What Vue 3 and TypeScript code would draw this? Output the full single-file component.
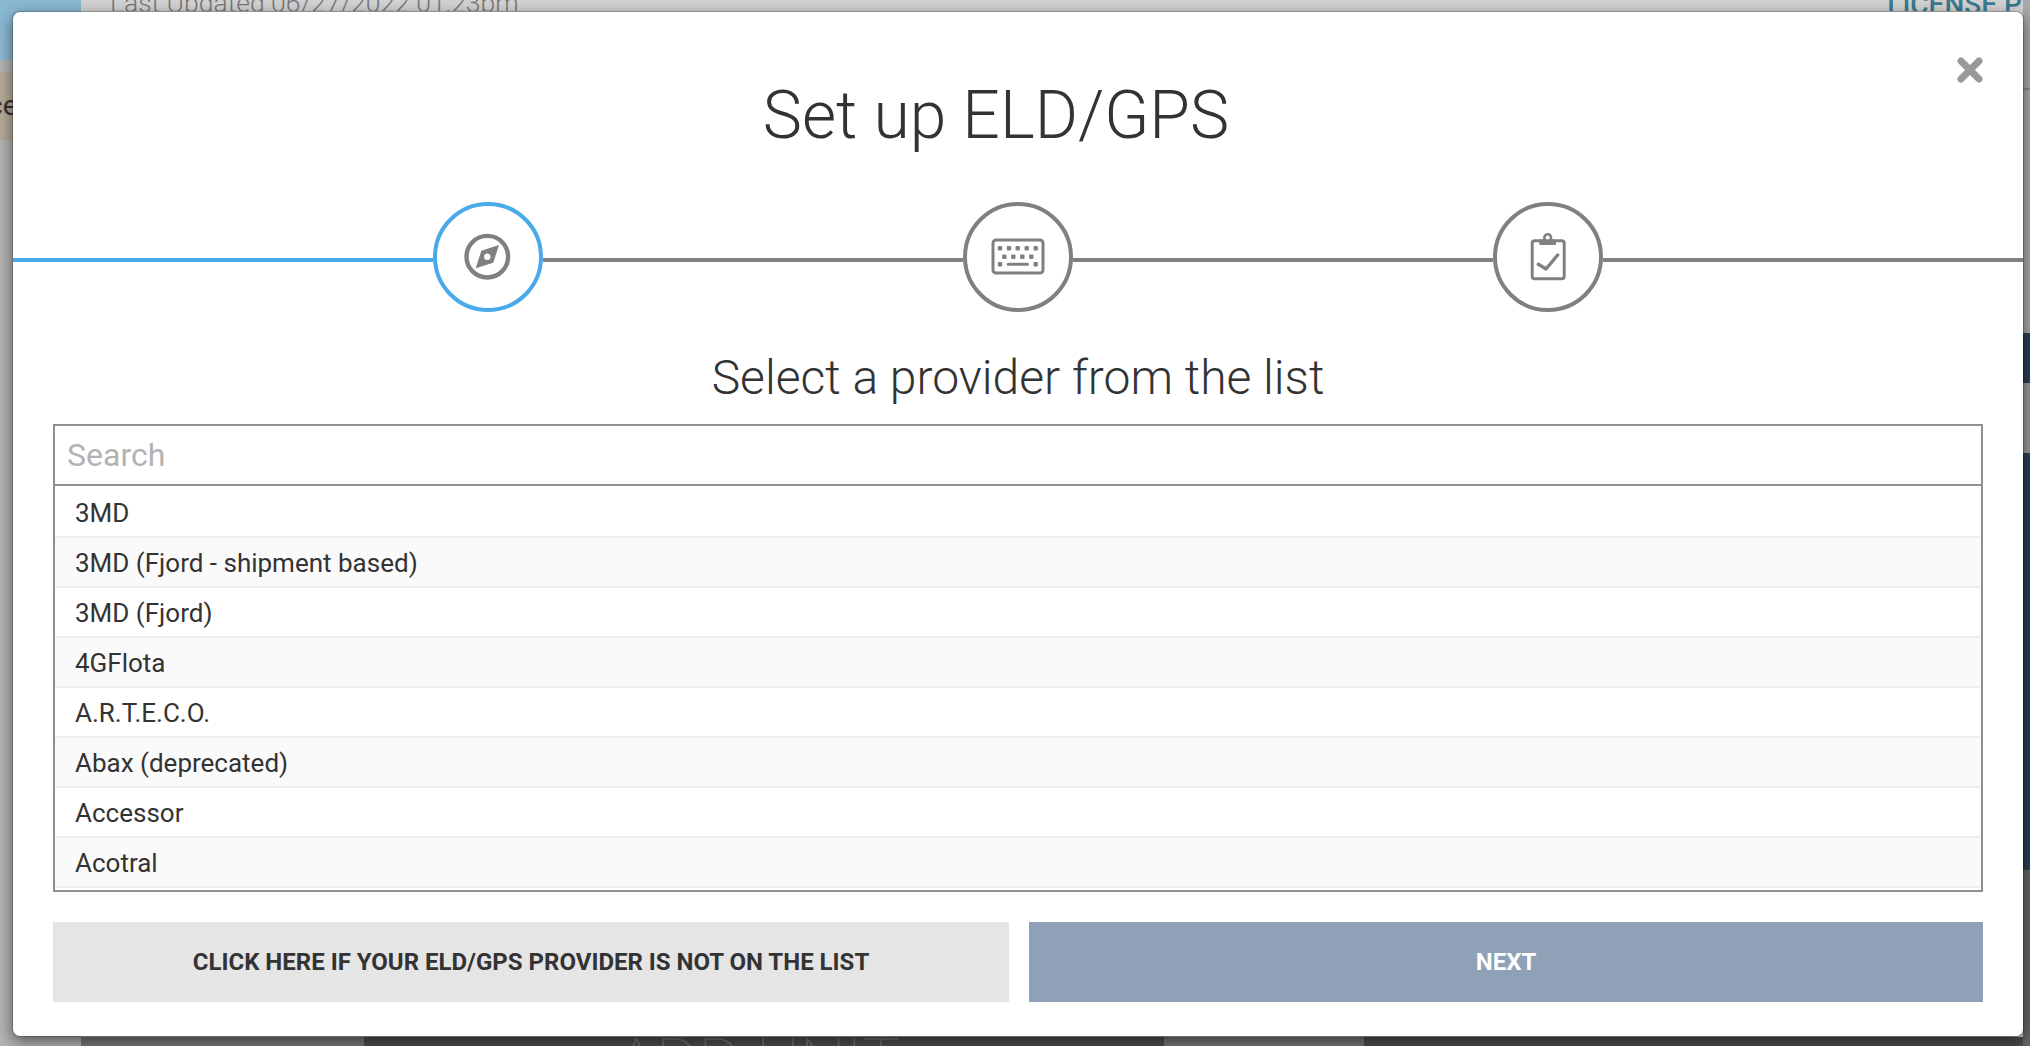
<script setup lang="ts">
import { ref } from 'vue'

const providers: string[] = [
  '3MD',
  '3MD (Fjord - shipment based)',
  '3MD (Fjord)',
  '4GFlota',
  'A.R.T.E.C.O.',
  'Abax (deprecated)',
  'Accessor',
  'Acotral'
]

const search = ref('')
const keyDots = [
  [-18, -8.7], [-9, -8.7], [-0.3, -8.7], [8.7, -8.7], [17.7, -8.7],
  [-13.7, -0.3], [-4.7, -0.3], [4.3, -0.3], [13.3, -0.3],
  [-18, 7.3], [17.7, 7.3]
]
</script>

<template>
  <div class="page">
    <!-- dimmed page behind the modal -->
    <div class="backdrop">
      <aside class="side">
        <div class="side-blue"></div>
        <div class="side-tan"><span>ce</span></div>
      </aside>
      <div class="main">
        <div class="content">
          <div class="top-row">
            <span class="updated">Last Updated 06/27/2022 01:23pm</span>
            <span class="license">LICENSE PLATE</span>
          </div>
        </div>
        <div class="bottom">
          <div class="bottom-left"></div>
          <div class="bottom-dark"><span>ADD UNIT</span></div>
          <div class="bottom-mid"></div>
          <div class="bottom-end"></div>
        </div>
      </div>
      <div class="edge">
        <div class="edge-grey"></div>
        <div class="edge-navy"><div class="edge-patch"></div></div>
        <div class="edge-dark"></div>
      </div>
    </div>

    <div class="modal">
      <button class="close" type="button" aria-label="Close">
        <svg width="30" height="30" viewBox="-15 -15 30 30">
          <path d="M-9 -9 L9 9 M9 -9 L-9 9" stroke="#999" stroke-width="7" stroke-linecap="round" fill="none" />
        </svg>
      </button>

      <h1 class="title">Set up ELD/GPS</h1>

      <div class="steps">
        <div class="line line--active"></div>
        <div class="step step--active">
          <svg width="60" height="60" viewBox="-30 -30 60 60">
            <circle cx="-0.7" cy="-0.3" r="20.8" fill="none" stroke="#808080" stroke-width="4.4" />
            <path d="M11 -12 L5.3 5.7 L-12.3 11.3 L-6.7 -6.3 Z" fill="#808080" />
            <circle cx="-0.7" cy="-0.3" r="3.2" fill="#fff" />
          </svg>
        </div>
        <div class="line"></div>
        <div class="step">
          <svg width="60" height="60" viewBox="-30 -30 60 60">
            <rect x="-25" y="-17" width="50" height="33" rx="3" fill="none" stroke="#808080" stroke-width="3" />
            <rect v-for="(d, i) in keyDots" :key="i" :x="d[0] - 2.2" :y="d[1] - 2.2" width="4.4" height="4.4" rx="1" fill="#808080" />
            <rect x="-11.3" y="5.8" width="22.3" height="3" rx="1.5" fill="#808080" />
          </svg>
        </div>
        <div class="line"></div>
        <div class="step">
          <svg width="60" height="60" viewBox="-30 -30 60 60">
            <rect x="-15.8" y="-16.2" width="32" height="38" rx="2.5" fill="none" stroke="#808080" stroke-width="3" />
            <circle cx="-0.3" cy="-19.3" r="3.4" fill="#fff" stroke="#808080" stroke-width="2.6" />
            <rect x="-8.7" y="-17.5" width="16.7" height="5.5" rx="1" fill="#808080" />
            <path d="M-9.7 7.3 L-2 12 L9.7 -2" fill="none" stroke="#808080" stroke-width="3.4" stroke-linejoin="round" stroke-linecap="round" />
          </svg>
        </div>
        <div class="line"></div>
      </div>

      <h2 class="subtitle">Select a provider from the list</h2>

      <div class="body">
        <div class="picker">
          <input v-model="search" class="search" type="text" placeholder="Search" />
          <ul class="list">
            <li v-for="name in providers" :key="name" class="row">{{ name }}</li>
          </ul>
        </div>

        <div class="actions">
          <button class="btn btn-alt" type="button">Click here if your ELD/GPS provider is not on the list</button>
          <button class="btn btn-next" type="button">Next</button>
        </div>
      </div>
    </div>
  </div>
</template>

<style>
html,
body {
  margin: 0;
  overflow: hidden;
}
</style>

<style scoped>
.page {
  position: relative;
  width: 2030px;
  height: 1046px;
  overflow: hidden;
  font-family: Roboto, "Liberation Sans", sans-serif;
  color: #333;
}

.backdrop {
  display: flex;
  height: 100%;
  background: #d3d3d3;
}
.side {
  width: 81px;
  flex: none;
  display: flex;
  flex-direction: column;
  background: #b4b4b4;
}
.side-blue {
  height: 60px;
  background: #8bb9d3;
}
.side-tan {
  height: 68px;
  margin-top: 12px;
  background: #b6ab98;
  overflow: hidden;
  font-size: 28px;
  line-height: 68px;
  text-indent: -12px;
}
.main {
  flex: 1;
  min-width: 0;
  display: flex;
  flex-direction: column;
}
.content {
  flex: 1;
}
.top-row {
  display: flex;
  justify-content: space-between;
  height: 11px;
  overflow: hidden;
  padding: 0 0 0 29px;
  white-space: nowrap;
}
.updated {
  font-size: 26.5px;
  font-weight: 300;
  line-height: 22px;
  margin-top: -8px;
  color: #777;
}
.license {
  font-size: 28px;
  font-weight: 500;
  line-height: 22px;
  margin-top: -6px;
  margin-right: -64px;
  color: #3b7a8f;
}
.bottom {
  flex: none;
  display: flex;
  height: 9px;
  background: #4d4d4d;
  overflow: hidden;
}
.bottom-left {
  width: 283px;
  background: #7a7a7a;
}
.bottom-dark {
  width: 800px;
  padding-left: 253px;
  box-sizing: border-box;
  color: #707070;
  font-size: 65px;
  font-weight: 100;
  line-height: 65px;
  white-space: nowrap;
}
.bottom-dark span {
  display: block;
  margin-top: -7px;
}
.bottom-mid {
  width: 200px;
  background: #777;
}
.bottom-end {
  flex: 1;
}
.edge {
  width: 7px;
  flex: none;
  display: flex;
  flex-direction: column;
  background: #666;
}
.edge-grey {
  height: 333px;
  background: linear-gradient(#a9a9a9 88px, #888 88px, #888 90px, #a9a9a9 90px);
}
.edge-navy {
  height: 537px;
  padding-top: 50px;
  box-sizing: border-box;
  background: #2a3f55;
}
.edge-patch {
  height: 70px;
  background: #999;
}
.edge-dark {
  flex: 1;
}

/* modal sits over the page */
.modal {
  position: absolute;
  left: 12px;
  top: 11px;
  width: 2012px;
  height: 1026px;
  box-sizing: border-box;
  display: flex;
  flex-direction: column;
  background: #fff;
  background-clip: padding-box;
  border: 1px solid rgba(0, 0, 0, 0.2);
  border-radius: 8px;
  box-shadow: 0 5px 15px rgba(0, 0, 0, 0.5);
}
.close {
  position: absolute;
  top: 43px;
  right: 38px;
  padding: 0;
  border: none;
  background: none;
  line-height: 0;
}
.title {
  margin: 0;
  padding: 61px 44px 0 0;
  height: 129px;
  font-size: 66px;
  line-height: 86px;
  font-weight: 300;
  text-align: center;
  color: #333;
}
.steps {
  display: flex;
  align-items: center;
  height: 110px;
}
.line {
  flex: 1;
  height: 4px;
  margin-top: 6px;
  background: #808080;
}
.line--active {
  background: #4aa9e9;
}
.step {
  width: 110px;
  height: 110px;
  flex: none;
  box-sizing: border-box;
  display: flex;
  align-items: center;
  justify-content: center;
  border: 4px solid #808080;
  border-radius: 50%;
  background: #fff;
}
.step--active {
  border-color: #4aa9e9;
}
.subtitle {
  margin: 0;
  height: 112px;
  padding-top: 36px;
  box-sizing: border-box;
  font-size: 48px;
  line-height: 60px;
  font-weight: 300;
  text-align: center;
  color: #333;
}
.body {
  padding: 0 40px;
}
.picker {
  height: 468px;
  box-sizing: border-box;
  display: flex;
  flex-direction: column;
  border: 2px solid #909090;
}
.search {
  height: 60px;
  flex: none;
  box-sizing: border-box;
  padding: 0 12px;
  border: none;
  border-bottom: 2px solid #909090;
  outline: none;
  font-family: inherit;
  font-size: 32px;
  font-weight: 400;
  color: #333;
}
.search::placeholder {
  color: #b3b3b3;
}
.list {
  flex: 1;
  margin: 0;
  padding: 2px 0 0;
  list-style: none;
  overflow: hidden;
}
.row {
  height: 50px;
  box-sizing: border-box;
  padding-left: 20px;
  border-bottom: 2px solid #eee;
  font-size: 26px;
  line-height: 50px;
  color: #333;
}
.row:nth-child(even) {
  background: #fafafa;
}
.actions {
  display: flex;
  gap: 20px;
  margin-top: 30px;
}
.btn {
  height: 80px;
  border: none;
  font-family: inherit;
  font-size: 24px;
  font-weight: 700;
  text-transform: uppercase;
}
.btn-alt {
  width: 956px;
  flex: none;
  background: #e5e5e5;
  color: #333;
}
.btn-next {
  flex: 1;
  background: #8ea1b6;
  color: #fff;
}
</style>
